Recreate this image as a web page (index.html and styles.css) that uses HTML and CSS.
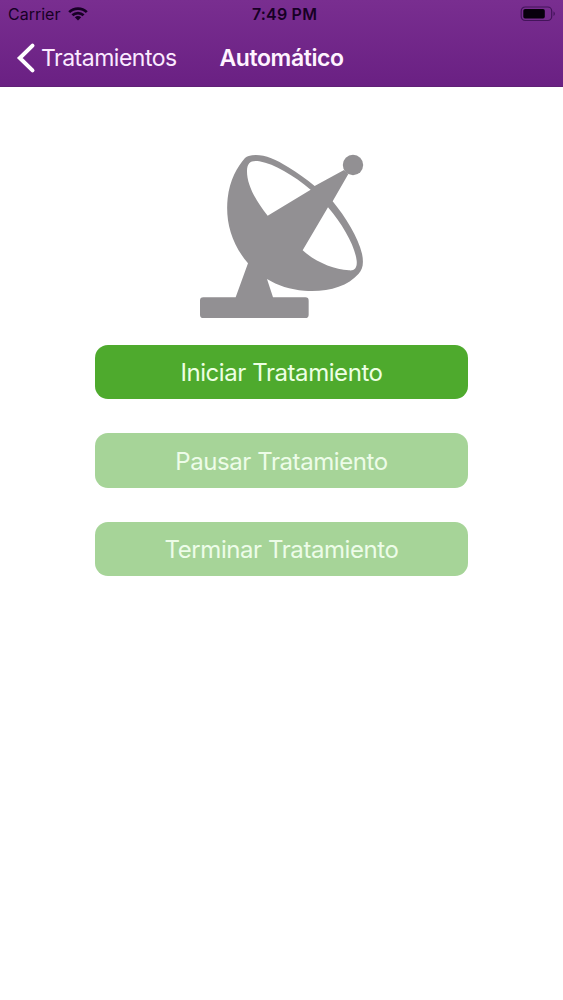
FILE: index.html
```html
<!DOCTYPE html>
<html lang="es">
<head>
<meta charset="utf-8">
<title>Automático</title>
<link rel="stylesheet" href="styles.css">
</head>
<body>
<header class="header">
  <div class="status">
    <div class="carrier"><span class="carrier-name">Carrier</span>
      <svg class="wifi" viewBox="0 0 20 14" width="20" height="14"><g fill="none" stroke="#170025" stroke-width="2.7"><path d="M1.2 5.1C6.1.4 13.9.4 18.8 5.1"/><path d="M4.4 8.3C7.6 5.3 12.4 5.3 15.6 8.3"/></g><path d="M6.8 10.3Q10 7.8 13.2 10.3L10 13.5Z" fill="#170025"/></svg>
    </div>
    <span class="clock">7:49 PM</span>
    <svg class="battery" viewBox="0 0 36 16" width="36" height="16"><rect x="1.2" y="1" width="30.5" height="13.5" rx="4" fill="none" stroke="#43145a" stroke-width="1.2"/><rect x="3.3" y="3" width="21.5" height="9.5" rx="1.8" fill="#08000d"/><path d="M33.5 5.3Q36.3 7.7 33.5 10.1Z" fill="#43145a"/></svg>
  </div>
  <nav class="nav">
    <a class="back"><svg class="chevron" viewBox="0 0 20 32" width="20" height="32"><path d="M16.5 3.6 3.8 16 16.5 28.4" fill="none" stroke="#fff" stroke-width="4" stroke-linecap="round"/></svg><span class="back-label">Tratamientos</span></a>
    <h1 class="title">Automático</h1>
  </nav>
</header>
<main class="content">
  <svg class="antenna" viewBox="0 0 555 540" width="185" height="180">
    <g fill="#929093">
      <circle cx="489" cy="60" r="30.5"/>
      <path fill-rule="evenodd" d="M176 33C208 23 251 38 294 66C323 84 350 103 374 123L462 75L475 87L428 169C467 217 504 276 516 326C522 355 518 373 506 386C471 426 409 442 343 437C301 434 263 422 231 402L249 457H346Q356 457 356 467V509Q356 519 346 519H40Q30 519 30 509V467Q30 457 40 457H137L174 355C122 294 106 226 113 160C119 105 142 65 165 39Q170 34 176 33ZM362 134C311 92 254 57 208 49C182 45 172 54 171 76C170 116 194 163 233 212ZM414 187L338 316C377 351 430 373 477 376C495 378 502 367 500 347C495 303 459 240 414 187Z"/>
    </g>
  </svg>
  <div class="actions">
    <button class="button start">Iniciar Tratamiento</button>
    <button class="button pause muted">Pausar Tratamiento</button>
    <button class="button finish muted">Terminar Tratamiento</button>
  </div>
</main>
</body>
</html>
```
FILE: styles.css
```css
* { box-sizing: border-box; }
body { margin: 0; min-height: 1000px; background: #fff; font-family: Inter, "Liberation Sans", sans-serif; }
svg { display: block; }
.header { height: 87px; background: linear-gradient(#792e90, #6a2083); border-bottom: 1px solid #602176; }
.status { height: 28px; display: grid; grid-template-columns: 1fr auto 1fr; align-items: center; padding: 0 7px 0 8px; color: #170025; font-size: 16px; line-height: 28px; }
.carrier { display: flex; align-items: center; gap: 8px; }
.carrier-name { letter-spacing: 0; }
.wifi { margin-top: -1px; }
.clock { font-weight: 600; font-size: 16px; letter-spacing: .2px; padding-left: 5px; }
.battery { justify-self: end; margin-top: -1px; }
.nav { height: 59px; display: flex; align-items: center; padding-left: 16px; color: #fff; }
.back { display: flex; align-items: center; width: 203.5px; gap: 5px; font-size: 23px; letter-spacing: -.5px; }
.back-label { white-space: nowrap; color: #fbeaff; padding-top: 1px; }
.title { margin: 0; padding-top: 1px; font-size: 23px; font-weight: 600; letter-spacing: -.4px; color: #fff3ff; }
.content { padding-top: 58px; display: flex; flex-direction: column; align-items: center; gap: 20px; }
.antenna { margin-left: 2px; }
.actions { width: 373px; display: flex; flex-direction: column; gap: 34px; }
.button { height: 54.4px; border: 0; border-radius: 13px; padding: 1px 0 0; background: #4eaa2d; color: #edffe3; font: 400 24px Inter, "Liberation Sans", sans-serif; letter-spacing: -.43px; }
.muted { background: #a6d498; color: #edfce8; }
```
